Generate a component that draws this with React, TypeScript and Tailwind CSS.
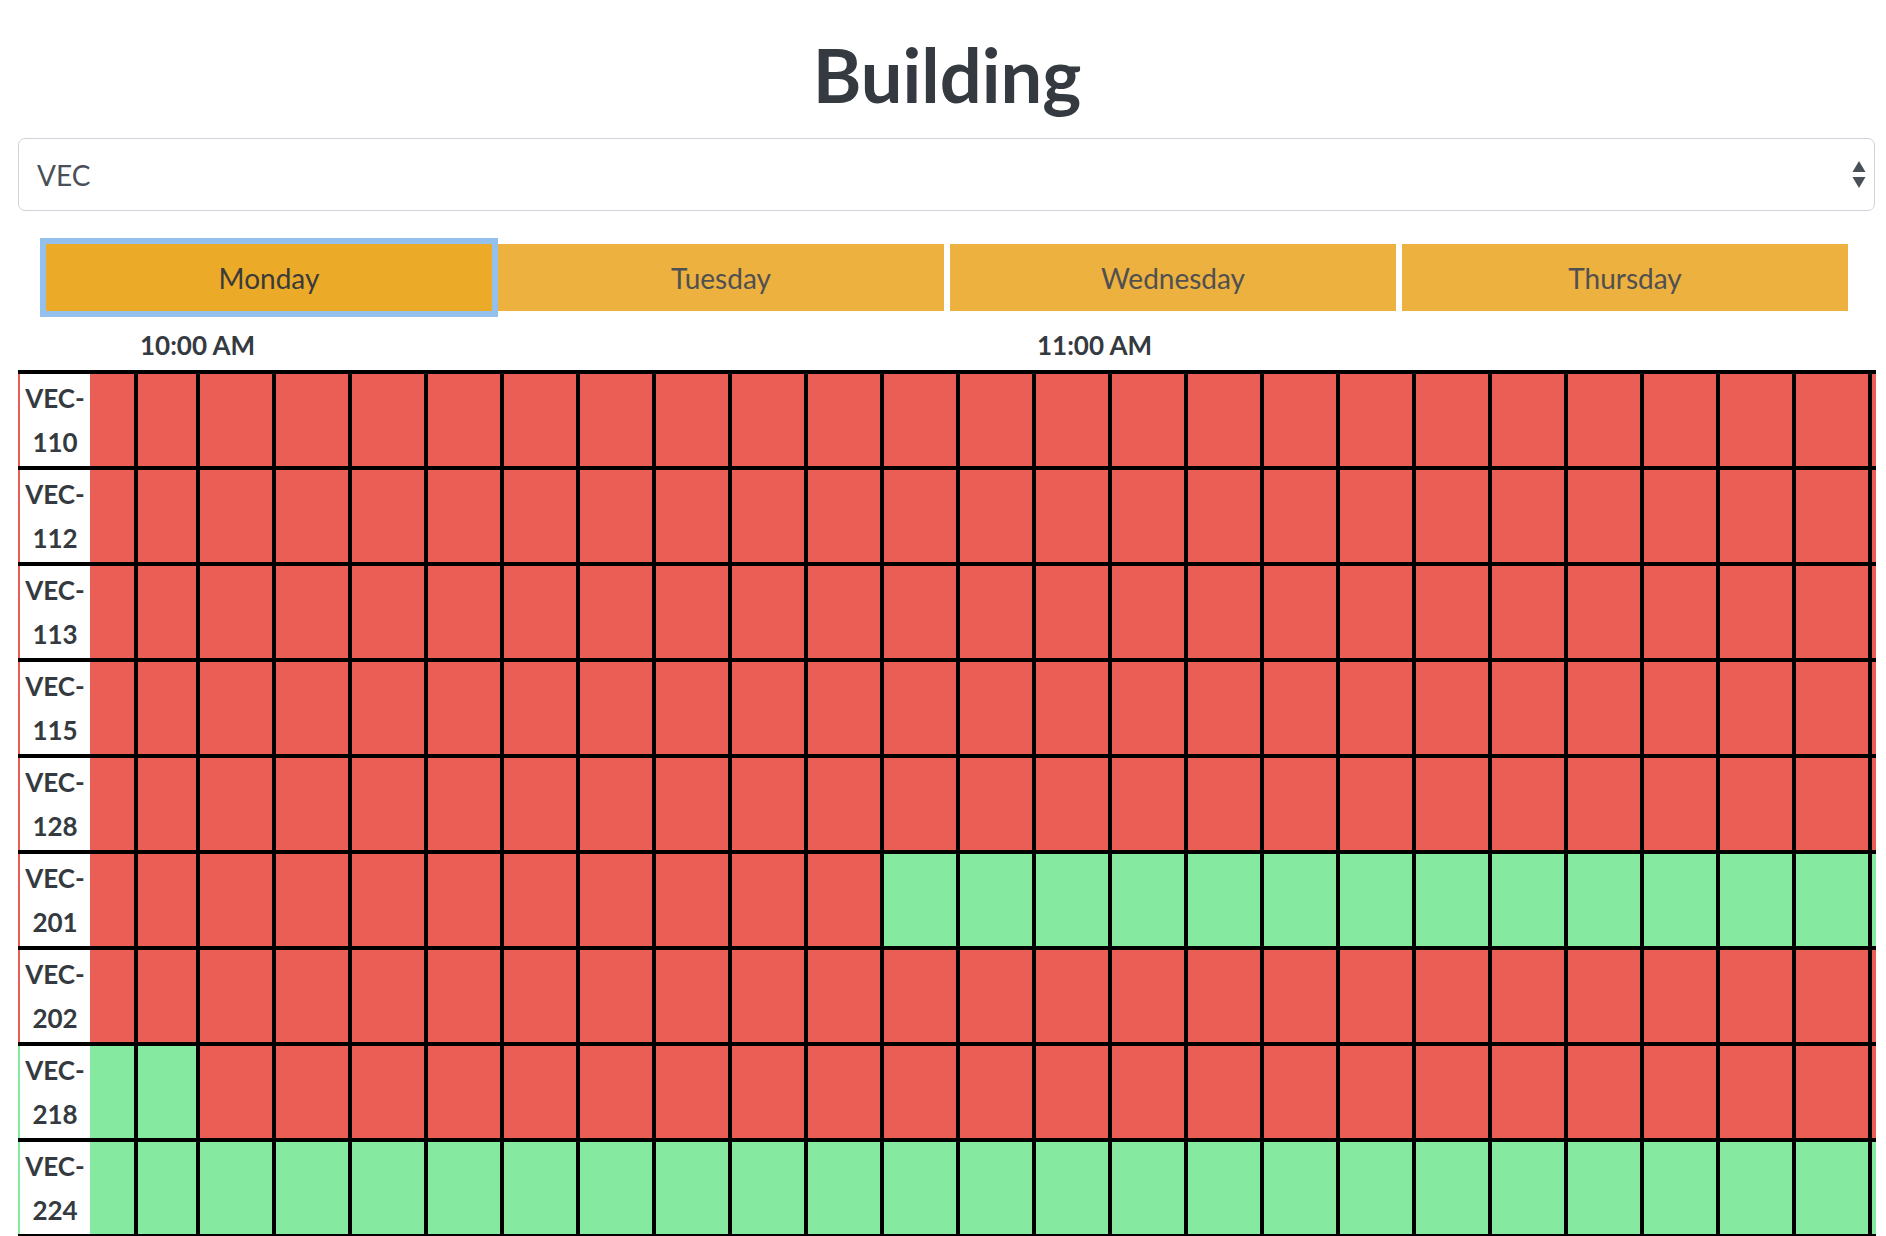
import React from "react"

const rooms = ["VEC-110", "VEC-112", "VEC-113", "VEC-115", "VEC-128", "VEC-201", "VEC-202", "VEC-218", "VEC-224"]
const days = ["Monday", "Tuesday", "Wednesday", "Thursday"]
const SLOTS = 25

// which 5-minute slots are free, per room
function isFree(room: string, i: number) {
  if (room === "VEC-201") return i >= 11
  if (room === "VEC-218") return i < 2
  if (room === "VEC-224") return true
  return false
}

function slotWidth(i: number) {
  if (i === 0) return "w-[48px]"
  if (i === 1) return "w-[62px]"
  return "w-[76px]"
}

function SelectArrows() {
  return (
    <svg width="14" height="27" viewBox="0 0 14 27" className="flex-none">
      <path d="M7 0 L13.5 11 L0.5 11 Z" fill="#4a5057" />
      <path d="M0.5 16 L13.5 16 L7 27 Z" fill="#4a5057" />
    </svg>
  )
}

function RoomRow({ room }: { room: string }) {
  const first = isFree(room, 0) ? "bg-[#85e9a0]" : "bg-[#eb5e55]"
  return (
    <div className="flex h-[96px] border-b-4 border-black">
      <div className={`w-[2px] flex-none ${first}`} />
      <div className="w-[70px] flex-none bg-white flex items-center justify-center text-center text-[26px] leading-[44px] font-bold text-[#343a40] break-words">
        {room}
      </div>
      {Array.from({ length: SLOTS }, (_, i) => (
        <div
          key={i}
          className={`${slotWidth(i)} flex-none border-r-4 border-black ${isFree(room, i) ? "bg-[#85e9a0]" : "bg-[#eb5e55]"}`}
        />
      ))}
    </div>
  )
}

export default function App() {
  return (
    <div className="h-screen overflow-hidden bg-white font-['Lato','Noto_Sans',sans-serif]">
      <div className="ml-[18px] w-[1858px] pt-[30px]">
        <h1 className="text-center text-[74px] leading-[89px] font-bold text-[#343a40]">Building</h1>

        <div className="mt-[19px] w-[1857px] h-[73px] rounded-[7px] border-[1.5px] border-[#ced4da] flex items-center justify-between pl-[18px] pr-[8px]">
          <span className="text-[28px] text-[#495057]">VEC</span>
          <SelectArrows />
        </div>

        <div className="mt-[33px] ml-[28px] flex gap-[6px]">
          {days.map((d, i) => (
            <button
              key={d}
              className={
                i === 0
                  ? "w-[446px] h-[67px] flex items-center justify-center bg-[#ecaa29] text-[28px] text-[#3a3a3a] ring-[6px] ring-[#94c0ee]"
                  : "w-[446px] h-[67px] flex items-center justify-center bg-[#edb140] text-[28px] text-[#505050]"
              }
            >
              {d}
            </button>
          ))}
        </div>

        <div className="mt-[19px] flex h-[31px] text-[26px] leading-[31px] font-bold text-[#343a40] whitespace-nowrap">
          <div className="w-[72px] flex-none" />
          {Array.from({ length: 14 }, (_, i) => (
            <div key={i} className={`${slotWidth(i)} flex-none`}>
              {i === 1 && <span className="ml-[2px]">10:00 AM</span>}
              {i === 13 && <span className="ml-[1px]">11:00 AM</span>}
            </div>
          ))}
        </div>

        <div className="mt-[9px] overflow-hidden border-t-4 border-black">
          {rooms.map((r) => (
            <RoomRow key={r} room={r} />
          ))}
        </div>
      </div>
    </div>
  )
}
